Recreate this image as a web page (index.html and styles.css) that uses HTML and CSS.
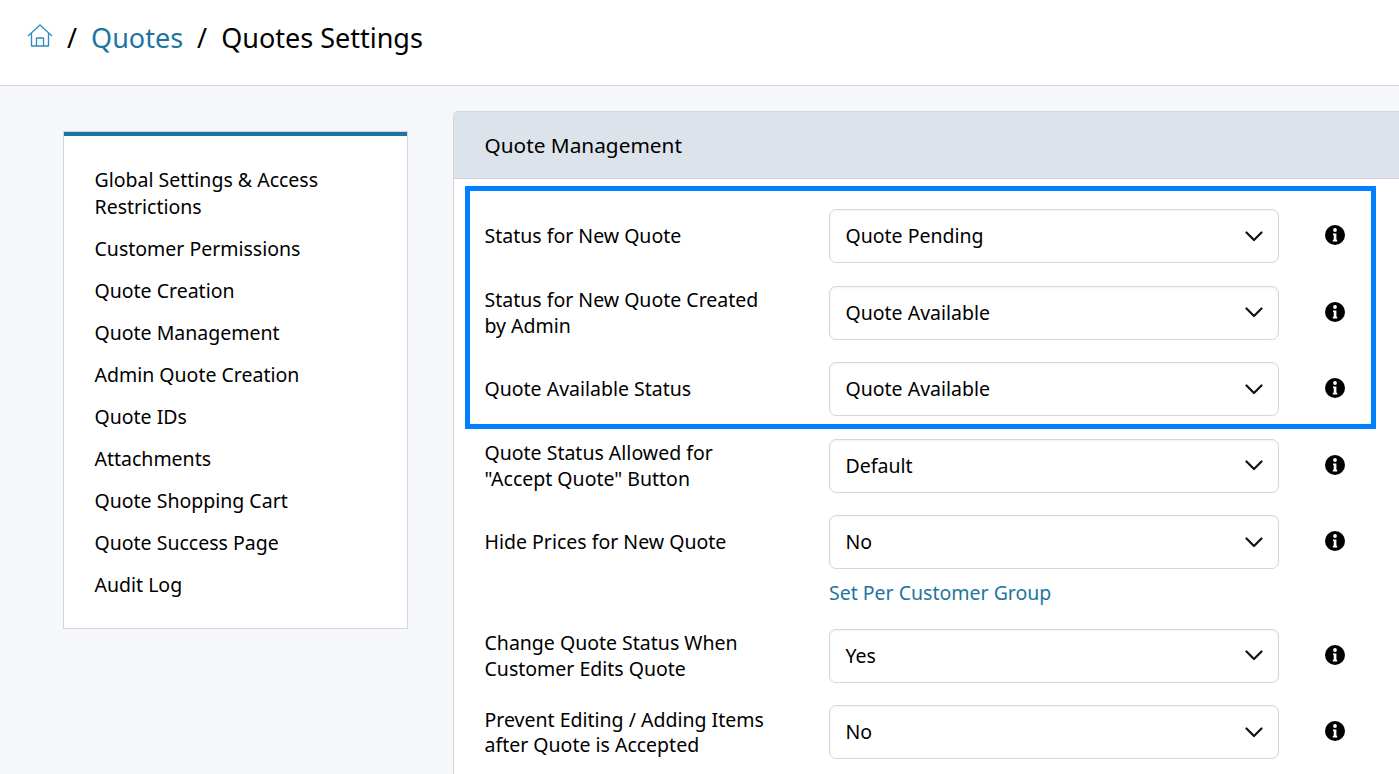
FILE: index.html
```html
<!DOCTYPE html>
<html lang="en">
<head>
    <meta charset="UTF-8">
    <meta name="viewport" content="width=device-width, initial-scale=1.0">
    <title>Quotes Settings</title>
    <link rel="stylesheet" href="styles.css">
</head>
<body>
    <svg class="sprite" width="0" height="0">
        <symbol id="chevron" viewBox="0 0 18 11">
            <path d="M1.5 1.5 L9 9 L16.5 1.5" fill="none" stroke="#111" stroke-width="2.2" stroke-linecap="round" stroke-linejoin="round"/>
        </symbol>
        <symbol id="info" viewBox="0 0 20 20">
            <circle cx="10" cy="10" r="10" fill="#000"/>
            <circle cx="10" cy="5" r="1.9" fill="#fff"/>
            <path d="M8 8.4 H11.4 V14.8 H12.2 V16.4 H7.8 V14.8 H8.7 V10 H8 Z" fill="#fff"/>
        </symbol>
    </svg>

    <header class="topbar">
        <a class="home" href="#">
            <svg width="26" height="24" viewBox="0 0 26 24" fill="none" stroke="#2a8cbd" stroke-width="1.3" stroke-linejoin="round">
                <path d="M1 12 L13 1 L25 12"/>
                <path d="M4.5 9.5 V22 H21.5 V9.5"/>
                <path d="M9.5 22 V14 H16.5 V22"/>
            </svg>
        </a>
        <span class="sep">/</span>
        <a class="crumb" href="#">Quotes</a>
        <span class="sep">/</span>
        <span class="current">Quotes Settings</span>
    </header>

    <div class="content">
        <nav class="side-nav">
            <a href="#">Global Settings &amp; Access Restrictions</a>
            <a href="#">Customer Permissions</a>
            <a href="#">Quote Creation</a>
            <a href="#">Quote Management</a>
            <a href="#">Admin Quote Creation</a>
            <a href="#">Quote IDs</a>
            <a href="#">Attachments</a>
            <a href="#">Quote Shopping Cart</a>
            <a href="#">Quote Success Page</a>
            <a href="#">Audit Log</a>
        </nav>

        <section class="panel">
            <h2 class="panel-title">Quote Management</h2>
            <div class="panel-body">
                <div class="highlight"></div>

                <div class="row">
                    <label>Status for New Quote</label>
                    <div class="select"><span>Quote Pending</span><svg class="chevron"><use href="#chevron"/></svg></div>
                    <svg class="info"><use href="#info"/></svg>
                </div>
                <div class="row">
                    <label>Status for New Quote Created by Admin</label>
                    <div class="select"><span>Quote Available</span><svg class="chevron"><use href="#chevron"/></svg></div>
                    <svg class="info"><use href="#info"/></svg>
                </div>
                <div class="row">
                    <label>Quote Available Status</label>
                    <div class="select"><span>Quote Available</span><svg class="chevron"><use href="#chevron"/></svg></div>
                    <svg class="info"><use href="#info"/></svg>
                </div>
                <div class="row">
                    <label>Quote Status Allowed for "Accept Quote" Button</label>
                    <div class="select"><span>Default</span><svg class="chevron"><use href="#chevron"/></svg></div>
                    <svg class="info"><use href="#info"/></svg>
                </div>
                <div class="row">
                    <label>Hide Prices for New Quote</label>
                    <div class="select"><span>No</span><svg class="chevron"><use href="#chevron"/></svg></div>
                    <svg class="info"><use href="#info"/></svg>
                    <a class="group-link" href="#">Set Per Customer Group</a>
                </div>
                <div class="row">
                    <label>Change Quote Status When Customer Edits Quote</label>
                    <div class="select"><span>Yes</span><svg class="chevron"><use href="#chevron"/></svg></div>
                    <svg class="info"><use href="#info"/></svg>
                </div>
                <div class="row">
                    <label>Prevent Editing / Adding Items after Quote is Accepted</label>
                    <div class="select"><span>No</span><svg class="chevron"><use href="#chevron"/></svg></div>
                    <svg class="info"><use href="#info"/></svg>
                </div>
            </div>
        </section>
    </div>
</body>
</html>
```

FILE: styles.css
```css
html, body {
    height: 100%;
    overflow: hidden;
}
body {
    margin: 0;
    background-color: #f6f7f9;
    color: #000;
    font-family: "Noto Sans", sans-serif;
    font-size: 19.5px;
}
a {
    text-decoration: none;
}
.sprite {
    position: absolute;
}
.topbar {
    display: flex;
    align-items: center;
    gap: 14px;
    height: 86px;
    box-sizing: border-box;
    padding: 0 27px 10px;
    background-color: #fff;
    border-bottom: 1px solid #d3d5e3;
    font-size: 27px;
}
.topbar .home {
    display: flex;
    margin-top: -4px;
}
.topbar .crumb {
    color: #1c75a1;
}
.content {
    display: flex;
    align-items: flex-start;
    padding: 25px 0 0 63px;
}
.side-nav {
    flex: none;
    display: flex;
    flex-direction: column;
    gap: 15px;
    width: 345px;
    box-sizing: border-box;
    margin-top: 20px;
    padding: 34px 30.5px 30px;
    background-color: #fff;
    border: 1px solid #d3d5e3;
    box-shadow: inset 0 4px 0 #1c75a1;
    line-height: 27px;
}
.side-nav a {
    color: #000;
}
.panel {
    flex: none;
    width: 960px;
    margin-left: 45px;
    background-color: #fff;
    border: 1px solid #d3d5e3;
    border-radius: 4px 0 0 0;
}
.panel-title {
    margin: 0;
    height: 67px;
    box-sizing: border-box;
    padding-left: 30.5px;
    background-color: #dde3ea;
    border-bottom: 1px solid #d3d5e3;
    font-size: 20.8px;
    font-weight: 400;
    line-height: 67px;
}
.panel-body {
    position: relative;
    padding: 30px 0 0 30.5px;
}
.highlight {
    position: absolute;
    left: 11px;
    top: 7px;
    width: 901px;
    height: 233px;
    border: 5px solid #007fff;
}
.row {
    display: grid;
    grid-template-columns: 344.5px 450px 110px;
    align-items: center;
    margin-bottom: 22.5px;
    line-height: 25.5px;
}
.row label {
    padding-right: 60px;
}
.select {
    display: flex;
    align-items: center;
    justify-content: space-between;
    height: 54px;
    box-sizing: border-box;
    padding: 0 15px 0 15.5px;
    background-color: #fff;
    border: 1px solid #d3d5e3;
    border-radius: 7px;
    box-shadow: inset 0 1px 3px rgba(0, 0, 0, 0.05);
}
.chevron {
    width: 18px;
    height: 11px;
}
.info {
    justify-self: center;
    width: 20px;
    height: 20px;
    margin-top: -2px;
    margin-left: 1px;
}
.group-link {
    grid-column: 2;
    margin-top: 11px;
    color: #1c75a1;
    line-height: 26px;
}
```
